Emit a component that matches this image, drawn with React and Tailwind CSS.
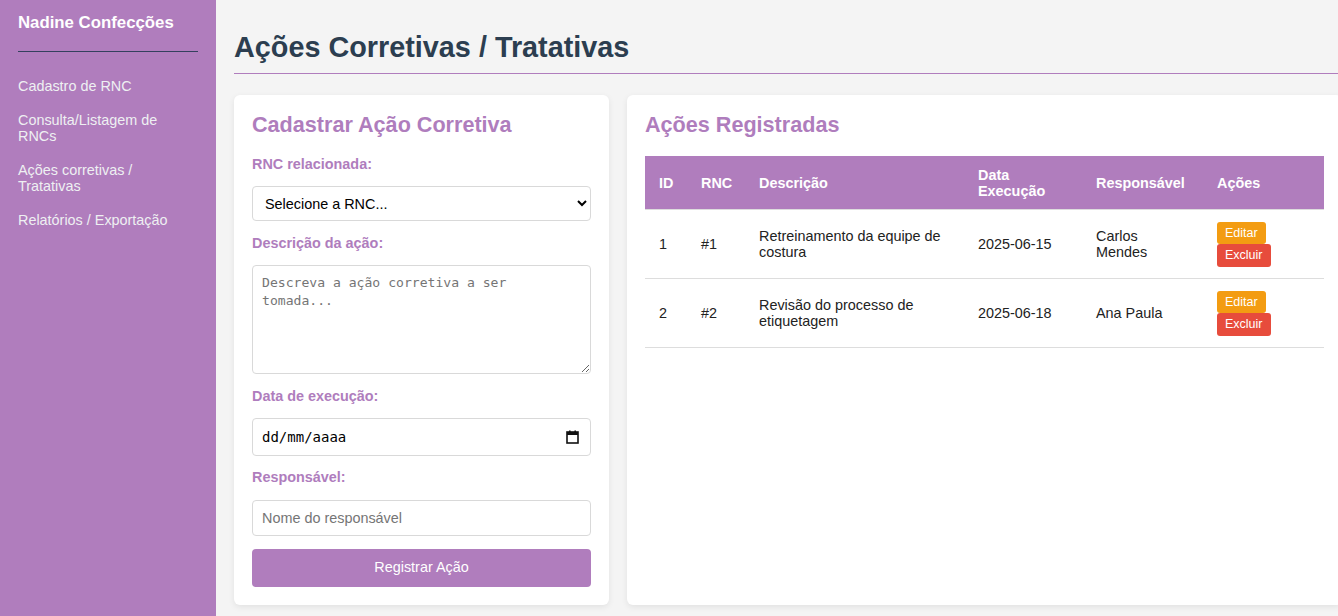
import React from 'react';

const purple = 'bg-[#b07dbd]';

const menu = [
  'Cadastro de RNC',
  'Consulta/Listagem de RNCs',
  'Ações corretivas / Tratativas',
  'Relatórios / Exportação',
];

const acoes = [
  { id: 1, rnc: '#1', desc: 'Retreinamento da equipe de costura', data: '2025-06-15', resp: 'Carlos Mendes' },
  { id: 2, rnc: '#2', desc: 'Revisão do processo de etiquetagem', data: '2025-06-18', resp: 'Ana Paula' },
];

const Label = ({ children, className = '' }) => (
  <label className={`block text-[14.4px] leading-[16px] font-bold text-[#af7dbd] ${className}`}>{children}</label>
);

const Sidebar = () => (
  <aside className={`w-[216px] shrink-0 ${purple} px-[18px] pt-[13px]`}>
    <h2 className="text-[16.8px] leading-[19px] font-bold text-white pb-[18.5px]">
      Nadine Confecções
    </h2>
    <div className="h-px bg-[#34405e]" />
    <ul className="mt-[26.5px] flex flex-col gap-[17px] w-[162px] text-[14.4px] leading-[16.5px] text-[#eef0f2]">
      {menu.map((item) => (
        <li key={item}>
          <a href="#">{item}</a>
        </li>
      ))}
    </ul>
  </aside>
);

const FormCard = () => (
  <div className="w-[375px] shrink-0 bg-white rounded-[6px] shadow-[0_2px_6px_rgba(0,0,0,0.08)] p-[18px]">
    <h2 className="text-[21.6px] leading-[24px] font-bold text-[#af7dbd] mb-[19px]">Cadastrar Ação Corretiva</h2>

    <Label className="mb-[14px]">RNC relacionada:</Label>
    <select className="block w-full h-[35px] border border-[#d9d9d9] rounded-[4px] bg-white px-[8px] text-[14.4px] text-black mb-[14px]">
      <option>Selecione a RNC...</option>
    </select>

    <Label className="mb-[14px]">Descrição da ação:</Label>
    <textarea
      placeholder="Descreva a ação corretiva a ser tomada..."
      className="block w-full h-[109px] border border-[#d9d9d9] rounded-[4px] bg-white px-[9px] py-[8px] font-['DejaVu_Sans_Mono',monospace] text-[13.1px] leading-[18px] placeholder:text-[#757575] mb-[14px]"
    />

    <Label className="mb-[14px]">Data de execução:</Label>
    <div className="flex items-center justify-between w-full h-[38px] border border-[#d9d9d9] rounded-[4px] bg-white pl-[9px] pr-[11px] mb-[13px]">
      <span className="font-['DejaVu_Sans_Mono',monospace] text-[14px] text-black">dd/mm/aaaa</span>
      <svg width="13" height="14" viewBox="0 0 13 14">
        <rect x="1" y="2" width="11" height="11" fill="none" stroke="#111" strokeWidth="1.6" />
        <rect x="1" y="2" width="11" height="3" fill="#111" />
        <rect x="3" y="0.5" width="1.6" height="2" fill="#111" />
        <rect x="8.4" y="0.5" width="1.6" height="2" fill="#111" />
      </svg>
    </div>

    <Label className="mb-[15px]">Responsável:</Label>
    <input
      type="text"
      placeholder="Nome do responsável"
      className="block w-full h-[36px] border border-[#d9d9d9] rounded-[4px] bg-white px-[9px] text-[14.4px] placeholder:text-[#757575] mb-[13px]"
    />

    <button className={`w-full h-[38px] ${purple} rounded-[4px] text-white text-[14.4px]`}>Registrar Ação</button>
  </div>
);

const TableCard = () => (
  <div className="w-[715px] shrink-0 bg-white rounded-[6px] shadow-[0_2px_6px_rgba(0,0,0,0.08)] p-[18px]">
    <h2 className="text-[21.6px] leading-[24px] font-bold text-[#af7dbd] mb-[19px]">Ações Registradas</h2>
    <table className="w-full table-fixed border-collapse text-[14.4px]">
      <colgroup>
        <col className="w-[42px]" />
        <col className="w-[58px]" />
        <col className="w-[219px]" />
        <col className="w-[118px]" />
        <col className="w-[121px]" />
        <col className="w-[121px]" />
      </colgroup>
      <thead>
        <tr className={`${purple} text-white`}>
          {['ID', 'RNC', 'Descrição', 'Data Execução', 'Responsável', 'Ações'].map((h) => (
            <th key={h} className="text-left font-bold px-[14px] py-[10.5px] leading-[16px] border-b border-[#dddddd] align-middle">
              {h}
            </th>
          ))}
        </tr>
      </thead>
      <tbody className="text-[#222]">
        {acoes.map((a) => (
          <tr key={a.id} className="border-b border-[#dddddd]">
            <td className="px-[14px] py-[11.5px] leading-[16px] align-middle">{a.id}</td>
            <td className="px-[14px] py-[11.5px] leading-[16px] align-middle">{a.rnc}</td>
            <td className="px-[14px] py-[11.5px] leading-[16px] align-middle">{a.desc}</td>
            <td className="px-[14px] py-[11.5px] leading-[16px] align-middle">{a.data}</td>
            <td className="px-[14px] py-[11.5px] leading-[16px] align-middle">{a.resp}</td>
            <td className="px-[14px] py-[11.5px] align-middle">
              <div className="flex flex-col items-start">
                <button className="h-[22px] px-[8px] rounded-[3px] bg-[#f39c12] text-white text-[12.5px] leading-[22px]">Editar</button>
                <button className="h-[23px] px-[8px] rounded-[3px] bg-[#e74c3c] text-white text-[12.5px] leading-[23px]">Excluir</button>
              </div>
            </td>
          </tr>
        ))}
      </tbody>
    </table>
  </div>
);

export default function App() {
  return (
    <div className="flex w-[1338px] h-[616px] overflow-hidden bg-[#f4f4f4] font-['Liberation_Sans',Arial,sans-serif]">
      <Sidebar />
      <main className="shrink-0 w-[1126px] pl-[18px] pt-[31px]">
        <h1 className="text-[28.8px] leading-[33px] font-bold text-[#2c3e50] pb-[9px]">
          Ações Corretivas / Tratativas
        </h1>
        <div className="h-px bg-[#b07dbd]" />
        <div className="mt-[21px] flex gap-[18px] items-stretch">
          <FormCard />
          <TableCard />
        </div>
      </main>
    </div>
  );
}
